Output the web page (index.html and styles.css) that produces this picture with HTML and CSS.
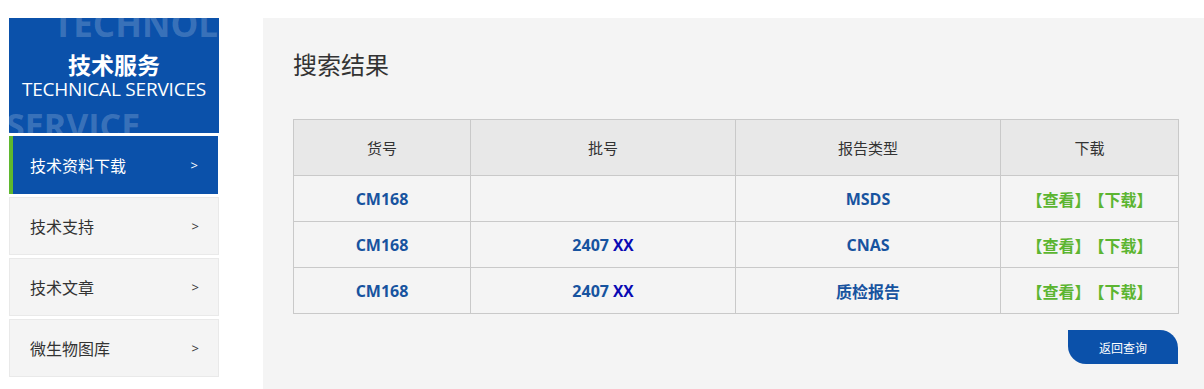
FILE: index.html
```html
<!DOCTYPE html>
<html lang="zh">
<head>
<meta charset="utf-8">
<title>搜索结果</title>
<link rel="stylesheet" href="styles.css">
</head>
<body>
<div class="page">
  <aside class="sidebar">
    <div class="side-head">
      <span class="wm wm-top">TECHNOL</span>
      <span class="wm wm-bottom">SERVICE</span>
      <div class="side-title">技术服务</div>
      <div class="side-sub">TECHNICAL SERVICES</div>
    </div>
    <ul class="side-menu">
      <li class="item active"><span>技术资料下载</span><span class="arrow">&gt;</span></li>
      <li class="item"><span>技术支持</span><span class="arrow">&gt;</span></li>
      <li class="item"><span>技术文章</span><span class="arrow">&gt;</span></li>
      <li class="item"><span>微生物图库</span><span class="arrow">&gt;</span></li>
    </ul>
  </aside>
  <main class="main">
    <h1 class="title">搜索结果</h1>
    <table class="results">
      <colgroup>
        <col class="c1"><col class="c2"><col class="c3"><col class="c4">
      </colgroup>
      <thead>
        <tr><th>货号</th><th>批号</th><th>报告类型</th><th>下载</th></tr>
      </thead>
      <tbody>
        <tr><td class="code">CM168</td><td class="code"></td><td class="code">MSDS</td><td class="links"><a>【查看】</a><a>【下载】</a></td></tr>
        <tr><td class="code">CM168</td><td class="code">2407<span class="xx">XX</span></td><td class="code">CNAS</td><td class="links"><a>【查看】</a><a>【下载】</a></td></tr>
        <tr><td class="code">CM168</td><td class="code">2407<span class="xx">XX</span></td><td class="code">质检报告</td><td class="links"><a>【查看】</a><a>【下载】</a></td></tr>
      </tbody>
    </table>
    <div class="actions"><a class="back-btn">返回查询</a></div>
  </main>
</div>
</body>
</html>
```

FILE: styles.css
```css
* { box-sizing: border-box; }
html, body { margin: 0; padding: 0; background: #fff; }
body {
  font-family: "Open Sans", "Noto Sans CJK SC", sans-serif;
  color: #333;
}
.page {
  display: flex;
  padding: 18px 0 0 9px;
  height: 389px;
  overflow: hidden;
}
.sidebar {
  width: 210px;
  flex: none;
}
.side-head {
  position: relative;
  height: 115px;
  background: #0b51aa;
  overflow: hidden;
  color: #fff;
  text-align: center;
  padding-top: 31px;
}
.wm {
  position: absolute;
  font-family: "Open Sans", sans-serif;
  font-weight: 700;
  font-size: 35px;
  line-height: 1;
  color: rgba(255, 255, 255, 0.2);
  white-space: nowrap;
}
.wm-top { left: 44px; top: -12px; }
.wm-bottom { left: -3px; top: 90px; font-size: 34px; }
.side-title {
  position: relative;
  font-family: "Noto Sans CJK SC", sans-serif;
  font-weight: 700;
  font-size: 23px;
  line-height: 30px;
}
.side-sub {
  position: relative;
  font-family: "Open Sans", sans-serif;
  font-size: 19px;
  line-height: 22px;
  margin-top: -1px;
  letter-spacing: -0.2px;
}
.side-menu {
  list-style: none;
  margin: 3px 0 0;
  padding: 0;
  display: flex;
  flex-direction: column;
  gap: 3px;
}
.item {
  height: 58px;
  display: flex;
  align-items: center;
  justify-content: space-between;
  padding: 0 19px 0 20px;
  background: #f4f4f4;
  border: 1px solid #e9e9e9;
  font-family: "Noto Sans CJK SC", sans-serif;
  font-size: 16px;
  color: #333;
}
.item .arrow {
  font-family: "Open Sans", sans-serif;
  font-size: 13px;
}
.item.active {
  background: #0b51aa;
  border: none;
  border-left: 4px solid #5fb82e;
  color: #fff;
  padding-left: 17px;
  padding-right: 20px;
  width: 209px;
}
.main {
  flex: 1;
  margin-left: 44px;
  background: #f4f4f4;
  padding: 0 26px 0 30px;
}
.title {
  margin: 29px 0 0;
  font-family: "Noto Sans CJK SC", sans-serif;
  font-weight: 400;
  font-size: 24px;
  line-height: 34px;
  color: #333;
}
.results {
  margin-top: 38px;
  width: 885px;
  border-collapse: collapse;
  table-layout: fixed;
}
.c1 { width: 177px; }
.c2 { width: 265px; }
.c3 { width: 265px; }
.c4 { width: 178px; }
.results th, .results td {
  border: 1px solid #c9c9c9;
  text-align: center;
  padding: 0;
}
.results th {
  height: 56px;
  background: #e8e8e8;
  font-family: "Noto Sans CJK SC", sans-serif;
  font-weight: 400;
  font-size: 15px;
  color: #333;
}
.results td {
  height: 46px;
  font-family: "Open Sans", "Noto Sans CJK SC", sans-serif;
  font-weight: 700;
  font-size: 16px;
}
.code { color: #17539f; }
.xx { color: #0a0ab4; margin-left: 4px; font-size: 15.5px; }
.links a {
  color: #5cb531;
  font-family: "Noto Sans CJK SC", sans-serif;
  font-weight: 700;
  font-size: 16px;
}
.links a + a { margin-left: 6px; }
.actions {
  display: flex;
  justify-content: flex-end;
  margin-top: 16px;
  width: 885px;
}
.back-btn {
  display: flex;
  align-items: center;
  justify-content: center;
  width: 110px;
  height: 34px;
  background: #0b51aa;
  color: #fff;
  font-family: "Noto Sans CJK SC", sans-serif;
  font-size: 12px;
  border-radius: 0 18px 0 18px;
}
```
